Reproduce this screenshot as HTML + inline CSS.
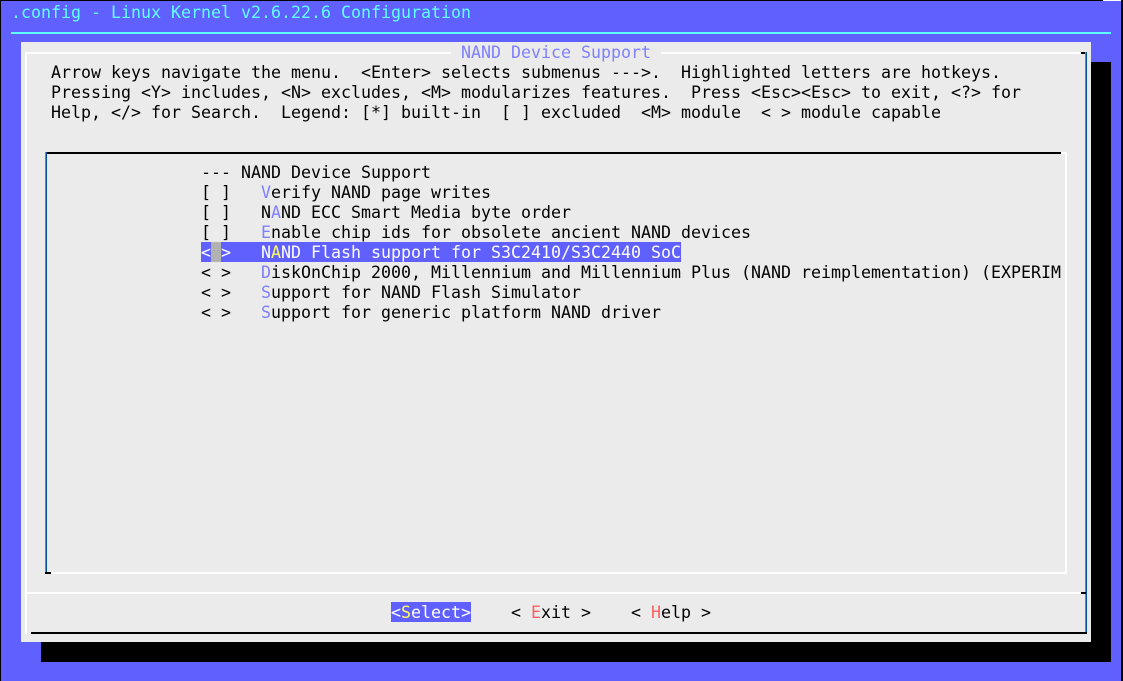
<!DOCTYPE html>
<html>
<head>
<meta charset="utf-8">
<style>
html,body{margin:0;padding:0}
body{width:1123px;height:681px;position:relative;overflow:hidden;background:#6060ff;font-family:"DejaVu Sans Mono","Liberation Mono",monospace;color:#000}
.r{position:absolute}
.t{position:absolute;white-space:pre;line-height:20px;height:20px;font-size:16.62px;margin-top:1px}
.h{color:#8080ff}
.y{color:#ffff60}
.e{color:#ff6060}
.w{color:#fff}
</style>
</head>
<body>
<div class="r" style="left:0;top:0;width:1123px;height:1px;background:#000"></div>
<div class="r" style="left:1103px;top:0;width:20px;height:1px;background:#fff"></div>
<div class="r" style="left:0;top:0;width:1px;height:681px;background:#000"></div>
<div class="r" style="left:1121px;top:0;width:2px;height:681px;background:#000"></div>

<div class="t" style="left:11px;top:2px;color:#60ffff">.config - Linux Kernel v2.6.22.6 Configuration</div>
<div class="r" style="left:11px;top:32px;width:1100px;height:2px;background:#60ffff"></div>

<div class="r" style="left:41px;top:62px;width:1070px;height:600px;background:#000"></div>
<div class="r" style="left:21px;top:42px;width:1070px;height:600px;background:#ebebeb"></div>

<div class="r" style="left:25px;top:52px;width:1060px;height:2px;background:#fff"></div>
<div class="r" style="left:25px;top:52px;width:2px;height:582px;background:#fff"></div>
<div class="r" style="left:1081px;top:52px;width:6px;height:2px;background:#000"></div>
<div class="r" style="left:1085px;top:52px;width:1px;height:582px;background:#b07a40"></div>
<div class="r" style="left:1086px;top:52px;width:1px;height:582px;background:#00509c"></div>
<div class="r" style="left:25px;top:592px;width:1060px;height:2px;background:#fff"></div>
<div class="r" style="left:1081px;top:592px;width:5px;height:2px;background:#000"></div>
<div class="r" style="left:31px;top:632px;width:1056px;height:2px;background:#000"></div>

<div class="r" style="left:451px;top:42px;width:210px;height:20px;background:#ebebeb"></div>
<div class="t h" style="left:461px;top:42px">NAND Device Support</div>

<div class="t" style="left:51px;top:62px">Arrow keys navigate the menu.  &lt;Enter&gt; selects submenus ---&gt;.  Highlighted letters are hotkeys.</div>
<div class="t" style="left:51px;top:82px">Pressing &lt;Y&gt; includes, &lt;N&gt; excludes, &lt;M&gt; modularizes features.  Press &lt;Esc&gt;&lt;Esc&gt; to exit, &lt;?&gt; for</div>
<div class="t" style="left:51px;top:102px">Help, &lt;/&gt; for Search.  Legend: [*] built-in  [ ] excluded  &lt;M&gt; module  &lt; &gt; module capable</div>

<div class="r" style="left:46px;top:152px;width:1015px;height:2px;background:#000"></div>
<div class="r" style="left:1061px;top:152px;width:6px;height:2px;background:#fff"></div>
<div class="r" style="left:1065px;top:152px;width:2px;height:422px;background:#fff"></div>
<div class="r" style="left:45px;top:152px;width:1px;height:422px;background:#b07a40"></div>
<div class="r" style="left:46px;top:152px;width:1px;height:422px;background:#00509c"></div>
<div class="r" style="left:46px;top:572px;width:1021px;height:2px;background:#fff"></div>
<div class="r" style="left:45px;top:572px;width:6px;height:2px;background:#000"></div>

<div class="t" style="left:201px;top:162px">--- NAND Device Support</div>
<div class="t" style="left:201px;top:182px">[ ]   <span class="h">V</span>erify NAND page writes</div>
<div class="t" style="left:201px;top:202px">[ ]   N<span class="h">A</span>ND ECC Smart Media byte order</div>
<div class="t" style="left:201px;top:222px">[ ]   <span class="h">E</span>nable chip ids for obsolete ancient NAND devices</div>
<div class="r" style="left:201px;top:242px;width:480px;height:20px;background:#6060ff"></div>
<div class="r" style="left:211px;top:242px;width:10px;height:20px;background:#b2b2b2"></div>
<div class="t w" style="left:201px;top:242px">&lt; &gt;   N<span class="y">A</span>ND Flash support for S3C2410/S3C2440 SoC</div>
<div class="t" style="left:201px;top:262px;width:860px;overflow:hidden">&lt; &gt;   <span class="h">D</span>iskOnChip 2000, Millennium and Millennium Plus (NAND reimplementation) (EXPERIM</div>
<div class="t" style="left:201px;top:282px">&lt; &gt;   <span class="h">S</span>upport for NAND Flash Simulator</div>
<div class="t" style="left:201px;top:302px">&lt; &gt;   <span class="h">S</span>upport for generic platform NAND driver</div>

<div class="r" style="left:391px;top:602px;width:80px;height:20px;background:#6060ff"></div>
<div class="t w" style="left:391px;top:602px">&lt;<span class="y">S</span>elect&gt;</div>
<div class="t" style="left:511px;top:602px">&lt; <span class="e">E</span>xit &gt;</div>
<div class="t" style="left:631px;top:602px">&lt; <span class="e">H</span>elp &gt;</div>
</body>
</html>
